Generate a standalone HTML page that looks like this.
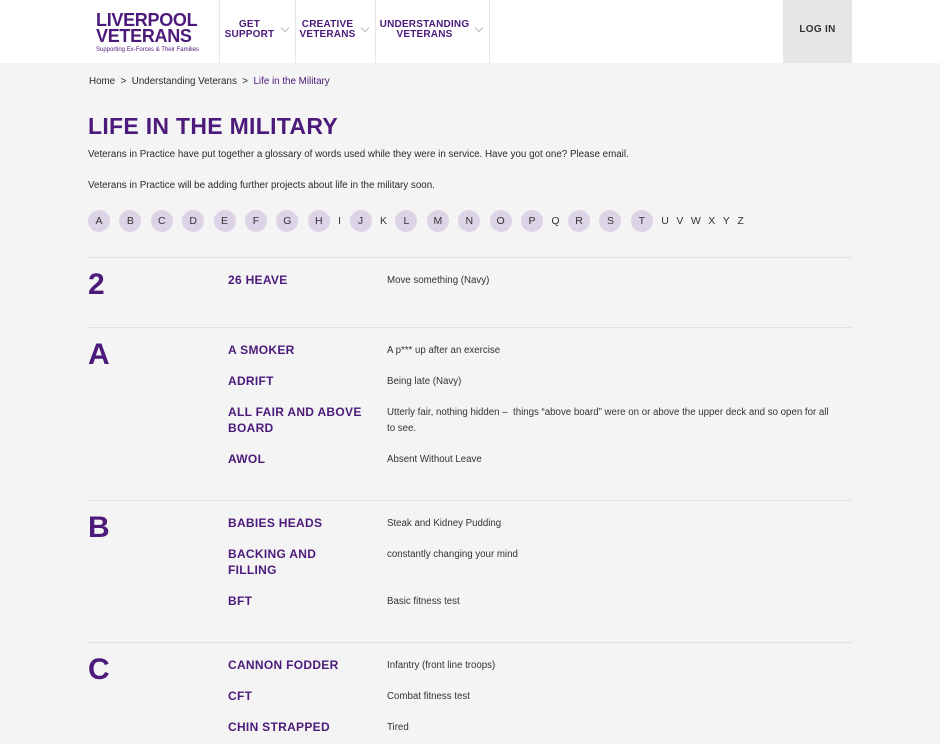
<!DOCTYPE html>
<html><head><meta charset="utf-8"><style>
*{margin:0;padding:0;box-sizing:border-box}
body{width:940px;height:744px;overflow:hidden;background:#f4f4f4;font-family:"Liberation Sans",sans-serif;color:#2a2a2a;position:relative}
.hdr{position:absolute;left:0;top:0;width:940px;height:63px;background:#fff}
.logo{position:absolute;left:96px;top:12px;color:#4b1a7b;font-weight:900;font-size:18px;line-height:16px;letter-spacing:-0.3px}
.logo small{display:block;font-size:6px;line-height:8px;font-weight:normal;letter-spacing:0;margin-top:2px}
.nav{position:absolute;top:0;height:63px;border-left:1px solid #e6e6e6;color:#4b1a7b;font-weight:bold;font-size:10px;line-height:10px;text-align:center;letter-spacing:.2px}
.nav span{position:absolute;top:20px;left:0;right:16px}
.nav i{position:absolute;right:7px;top:25px;width:6px;height:6px;border-right:1px solid #bbb;border-bottom:1px solid #bbb;transform:rotate(45deg)}
.login{position:absolute;left:783px;top:0;width:69px;height:63px;background:#e6e6e6;color:#333;font-weight:bold;font-size:10px;text-align:center;line-height:60px;letter-spacing:.3px}
.t{position:absolute;font-size:9.8px}
h1{position:absolute;left:88px;top:113px;color:#4b1a7b;font-size:23px;font-weight:900;letter-spacing:.3px}
.alpha{position:absolute;left:88px;top:210px;height:22px;display:flex;align-items:center;font-size:10.5px;color:#333}
.alpha b{font-weight:normal;display:inline-block;width:22px;height:22px;border-radius:50%;background:#ddd3e6;text-align:center;line-height:22px;margin-right:9.4px}
.alpha u{text-decoration:none;margin-right:8.5px;margin-left:-1px}
.hr{position:absolute;left:88px;width:764px;height:1px;background:#e2e2e2}
.L{position:absolute;left:88px;color:#4b1a7b;font-size:30px;font-weight:900}
.k{position:absolute;left:228px;color:#4b1a7b;font-size:12px;font-weight:900;letter-spacing:.3px;line-height:16px;width:140px}
.d{position:absolute;left:387px;font-size:9.7px;line-height:16px;width:450px;color:#333}
</style></head><body>
<div class="hdr">
<div class="logo">LIVERPOOL<br>VETERANS<small>Supporting Ex-Forces &amp; Their Families</small></div>
<div class="nav" style="left:219px;width:76px"><span>GET<br>SUPPORT</span><i></i></div>
<div class="nav" style="left:295px;width:80px"><span>CREATIVE<br>VETERANS</span><i></i></div>
<div class="nav" style="left:375px;width:115px;border-right:1px solid #e6e6e6"><span>UNDERSTANDING<br>VETERANS</span><i></i></div>
<div class="login">LOG IN</div>
</div>
<div class="t" style="left:89px;top:76px">Home &nbsp;&gt;&nbsp; Understanding Veterans &nbsp;&gt;&nbsp; <span style="color:#4b1a7b">Life in the Military</span></div>
<h1>LIFE IN THE MILITARY</h1>
<div class="t" style="left:88px;top:149px">Veterans in Practice have put together a glossary of words used while they were in service. Have you got one? Please email.</div>
<div class="t" style="left:88px;top:180px">Veterans in Practice will be adding further projects about life in the military soon.</div>
<div class="alpha"><b>A</b><b>B</b><b>C</b><b>D</b><b>E</b><b>F</b><b>G</b><b>H</b><u>I</u><b>J</b><u>K</u><b>L</b><b>M</b><b>N</b><b>O</b><b>P</b><u>Q</u><b>R</b><b>S</b><b>T</b><u>U</u><u>V</u><u>W</u><u>X</u><u>Y</u><u>Z</u></div>

<div class="hr" style="top:257px"></div>
<div class="L" style="top:268px">2</div>
<div class="k" style="top:272px">26 HEAVE</div><div class="d" style="top:273px">Move something (Navy)</div>

<div class="hr" style="top:327px"></div>
<div class="L" style="top:338px">A</div>
<div class="k" style="top:342px">A SMOKER</div><div class="d" style="top:343px">A p*** up after an exercise</div>
<div class="k" style="top:373px">ADRIFT</div><div class="d" style="top:374px">Being late (Navy)</div>
<div class="k" style="top:404px">ALL FAIR AND ABOVE BOARD</div><div class="d" style="top:405px">Utterly fair, nothing hidden –&nbsp; things “above board” were on or above the upper deck and so open for all to see.</div>
<div class="k" style="top:451px">AWOL</div><div class="d" style="top:452px">Absent Without Leave</div>

<div class="hr" style="top:500px"></div>
<div class="L" style="top:511px">B</div>
<div class="k" style="top:515px">BABIES HEADS</div><div class="d" style="top:516px">Steak and Kidney Pudding</div>
<div class="k" style="top:546px">BACKING AND FILLING</div><div class="d" style="top:547px">constantly changing your mind</div>
<div class="k" style="top:593px">BFT</div><div class="d" style="top:594px">Basic fitness test</div>

<div class="hr" style="top:642px"></div>
<div class="L" style="top:653px">C</div>
<div class="k" style="top:657px">CANNON FODDER</div><div class="d" style="top:658px">Infantry (front line troops)</div>
<div class="k" style="top:688px">CFT</div><div class="d" style="top:689px">Combat fitness test</div>
<div class="k" style="top:719px">CHIN STRAPPED</div><div class="d" style="top:720px">Tired</div>
</body></html>
